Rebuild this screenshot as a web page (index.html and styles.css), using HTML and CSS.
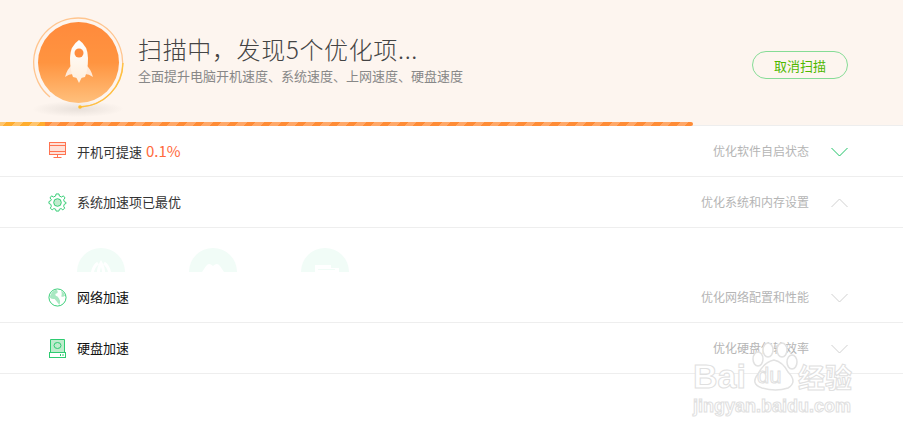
FILE: index.html
```html
<!DOCTYPE html>
<html lang="zh-CN">

<head>
    <meta charset="UTF-8">
    <title>扫描中</title>
    <link rel="stylesheet" href="styles.css">
</head>

<body>
    <div class="page">
        <div class="top">
            <div class="badge">
                <svg width="110" height="112" viewBox="0 0 110 112">
                    <defs>
                        <linearGradient id="disc" x1="0" y1="0" x2="0" y2="1">
                            <stop offset="0" stop-color="#ff8a3c" />
                            <stop offset="0.5" stop-color="#ff9440" />
                            <stop offset="1" stop-color="#ffc07c" />
                        </linearGradient>
                        <linearGradient id="body" x1="0" y1="0" x2="0" y2="1">
                            <stop offset="0" stop-color="#ffffff" />
                            <stop offset="1" stop-color="#fff0e0" />
                        </linearGradient>
                        <radialGradient id="shade">
                            <stop offset="0" stop-color="#e8e0da" />
                            <stop offset="1" stop-color="#fdf5ef" />
                        </radialGradient>
                    </defs>
                    <ellipse cx="45" cy="99" rx="46" ry="8" fill="url(#shade)" />
                    <circle cx="45.500" cy="52.500" r="40.500" fill="url(#disc)" />
                    <path d="M17 87 A44.500 44.500 0 1 1 47 97" fill="none" stroke="#ffc58f" stroke-width="1.300" />
                    <path d="M90 53 A44.500 44.500 0 0 1 47 97" fill="none" stroke="#ffc23e" stroke-width="1.300" />
                    <circle cx="47" cy="97" r="1.800" fill="#ffbc2e" />
                    <path d="M32 67 Q34 59 39 55 L40 64 Q36 64 32 67Z" fill="#ffe9d8" />
                    <path d="M60 67 Q58 59 53 55 L52 64 Q56 64 60 67Z" fill="#ffe9d8" />
                    <path d="M46 30 Q55 36 55 48 Q55 60 52 67 Q46 69 40 67 Q37 60 37 48 Q37 36 46 30Z" fill="url(#body)" />
                    <circle cx="46" cy="43" r="4.500" fill="#ff8d3f" />
                    <path d="M43 67 L49 67 L46 73Z" fill="#fff0e0" />
                </svg>
            </div>
            <div class="top-text">
                <div class="title">扫描中，发现5个优化项...</div>
                <div class="sub">全面提升电脑开机速度、系统速度、上网速度、硬盘速度</div>
            </div>
            <button class="cancel">取消扫描</button>
        </div>
        <div class="bar-track">
            <div class="bar"></div>
        </div>

        <div class="row">
            <svg class="row-icon" width="19" height="19" viewBox="0 0 19 19">
                <rect x="1.500" y="0.500" width="16" height="12" fill="#ffe1d8" stroke="#ff7350" />
                <path d="M1.500 3.500H17.500M1.500 9.500H17.500M9.500 12.500V15.500M5.500 15.500H13.500" fill="none" stroke="#ff7350" />
            </svg>
            <div class="name">开机可提速 <span class="pct">0.1%</span></div>
            <div class="hint">优化软件自启状态</div>
            <svg class="chev" width="17" height="10" viewBox="0 0 17 10">
                <path d="M0.500 1 L8.500 9 L16.500 1" fill="none" stroke="#1ec266" />
            </svg>
        </div>
        <div class="row">
            <svg class="row-icon" width="19" height="19" viewBox="0 0 20 20">
                <circle cx="10" cy="10" r="4" fill="#bfeccd" stroke="#2ecb71" />
                <path d="M8.500 1H11.500L12 3.200L14.300 4.200L16.200 3L17.900 5.200L16.500 7L17 9L19 10L19 11L17 12L16.500 14L17.600 16L15.600 17.700L13.800 16.400L12 17L11.500 19H8.500L8 17L6.200 16.400L4.400 17.700L2.400 16L3.500 14L3 12L1 11V9L3 8L3.500 7L2.100 5.200L3.800 3L5.700 4.200L8 3.200Z" fill="none" stroke="#2ecb71" />
            </svg>
            <div class="name">系统加速项已最优</div>
            <div class="hint">优化系统和内存设置</div>
            <svg class="chev" width="17" height="10" viewBox="0 0 17 10">
                <path d="M0.500 9 L8.500 1 L16.500 9" fill="none" stroke="#d0d0d0" />
            </svg>
        </div>
        <div class="panel">
            <div class="disc">
                <svg width="48" height="48" viewBox="0 0 48 48">
                    <path d="M15 30 Q15 19 21 15 M33 30 Q33 19 27 15 M21 30 Q21 20 24 15 Q27 20 27 30" fill="none" stroke="#fff" stroke-width="3" />
                </svg>
            </div>
            <div class="disc">
                <svg width="48" height="48" viewBox="0 0 48 48">
                    <path d="M13 24 L17 18 Q20 14 24 18 Q28 14 31 18 L35 24 L31 30 H17Z" fill="#fff" />
                </svg>
            </div>
            <div class="disc">
                <svg width="48" height="48" viewBox="0 0 48 48">
                    <path d="M14 17 H30 V20 H38 V30 H14Z" fill="#fff" />
                    <path d="M17 21.500 H34" stroke="#f1fcf7" />
                </svg>
            </div>
        </div>
        <div class="row">
            <svg class="row-icon" width="19" height="19" viewBox="0 0 20 20">
                <circle cx="10" cy="10" r="9" fill="#fff" stroke="#2ecb71" />
                <path d="M9 1.500 Q3 3 2 10 Q4 12 7 11.500 Q10 15 12 18 Q14 13 10 9 Q7 8 8 6 Q12 5 9 1.500Z M14 3 Q15 7 14 9 Q16 10 18 8 Q17 5 14 3Z" fill="#a9e8c2" />
            </svg>
            <div class="name dark">网络加速</div>
            <div class="hint">优化网络配置和性能</div>
            <svg class="chev" width="17" height="10" viewBox="0 0 17 10">
                <path d="M0.500 1 L8.500 9 L16.500 1" fill="none" stroke="#d0d0d0" />
            </svg>
        </div>
        <div class="row">
            <svg class="row-icon" width="19" height="19" viewBox="0 0 19 19">
                <path d="M2.500 0.500H16.500V13.500H2.500Z" fill="#bfeccd" stroke="#2ecb71" />
                <rect x="1.500" y="13.500" width="16" height="5" fill="#fff" stroke="#2ecb71" />
                <ellipse cx="9.500" cy="6.500" rx="3.500" ry="3" fill="none" stroke="#2ecb71" />
                <path d="M12.500 15V17M15 15V17" stroke="#2ecb71" />
            </svg>
            <div class="name dark">硬盘加速</div>
            <div class="hint">优化硬盘传输效率</div>
            <svg class="chev" width="17" height="10" viewBox="0 0 17 10">
                <path d="M0.500 1 L8.500 9 L16.500 1" fill="none" stroke="#d0d0d0" />
            </svg>
        </div>

        <div class="mark">
            <svg class="mark-paw" width="52" height="52" viewBox="0 0 52 52">
                <g fill="#fff" stroke="#e2e2e2" stroke-width="1.500">
                    <ellipse cx="10" cy="17" rx="5" ry="7" />
                    <ellipse cx="20" cy="8" rx="5" ry="7" />
                    <ellipse cx="34" cy="8" rx="5" ry="7" />
                    <ellipse cx="44" cy="20" rx="5" ry="7" />
                    <path d="M26 18 Q35 20 40 30 Q50 40 40 46 Q28 50 14 46 Q2 42 10 32 Q16 20 26 18Z" />
                </g>
            </svg>
            <div class="mark-logo">
                <span class="mark-bai">Bai</span>
                <span class="mark-du">du</span>
                <span class="mark-cn">经验</span>
            </div>
            <div class="mark-url">jingyan.baidu.com</div>
        </div>
    </div>
</body>

</html>
```
FILE: styles.css
```css
body {
    margin: 0;
    background-color: #fff;
    font-family: "Noto Sans CJK SC", "Liberation Sans", sans-serif;
}

.page {
    position: relative;
    width: 903px;
    height: 435px;
    overflow: hidden;
}

.top {
    display: flex;
    align-items: flex-start;
    height: 122px;
    padding-left: 33px;
    background-color: #fdf5ef;
}

.badge {
    width: 105px;
    height: 122px;
    padding-top: 10px;
    box-sizing: border-box;
}

.top-text {
    width: 614px;
    padding-top: 32px;
}

.title {
    font-size: 24px;
    font-weight: 300;
    letter-spacing: 0.65px;
    line-height: 34px;
    color: #444;
}

.sub {
    font-size: 13px;
    line-height: 20px;
    color: #888;
}

.cancel {
    width: 96px;
    height: 28px;
    margin-top: 51px;
    padding: 0;
    font-family: inherit;
    font-size: 13px;
    color: #4fb800;
    background-color: transparent;
    border: 1px solid #86dc96;
    border-radius: 14px;
}

.bar-track {
    height: 4px;
    background-color: #fdf5ef;
    border-bottom: 1px solid #eee;
    box-sizing: border-box;
}

.bar {
    width: 693px;
    height: 4px;
    border-radius: 0 2px 2px 0;
    background:
        repeating-linear-gradient(-45deg, #ffad2e 0 6px, #ffc56e 6px 12px) 0 0 / 45px 100% no-repeat,
        repeating-linear-gradient(-45deg, #ff8c36 0 6px, #ffa869 6px 12px);
}

.row {
    display: flex;
    align-items: center;
    height: 50px;
    padding: 0 55px 0 48px;
    border-bottom: 1px solid #eee;
}

.row-icon {
    margin-right: 10px;
    flex: none;
}

.name {
    flex: 1;
    padding-bottom: 2px;
    font-size: 13px;
    color: #333;
}

.dark {
    color: #111;
}

.pct {
    margin-left: 1px;
    font-size: 15px;
    color: #ff6a3c;
}

.hint {
    margin-right: 22px;
    padding-bottom: 2px;
    font-size: 12px;
    color: #b5b5b5;
}

.chev {
    flex: none;
    margin-top: 2px;
}

.panel {
    display: flex;
    gap: 64px;
    height: 24px;
    padding: 20px 0 0 77px;
    overflow: hidden;
}

.disc {
    width: 48px;
    height: 48px;
    border-radius: 50%;
    background-color: #f1fcf7;
    flex: none;
}

.mark {
    position: absolute;
    left: 693px;
    top: 342px;
    width: 170px;
}

.mark-paw {
    position: absolute;
    left: 55px;
    top: 0;
}

.mark-logo {
    position: relative;
    display: flex;
    align-items: center;
    height: 52px;
    padding-top: 16px;
    box-sizing: border-box;
    font-family: "Liberation Sans", "Noto Sans CJK SC", sans-serif;
    color: #fff;
    -webkit-text-stroke: 1px #e0e0e0;
    white-space: nowrap;
}

.mark-bai {
    width: 64px;
    font-size: 34px;
    font-weight: bold;
}

.mark-du {
    width: 41px;
    font-size: 22px;
}

.mark-cn {
    font-size: 27px;
    font-weight: bold;
}

.mark-url {
    font-family: "Liberation Sans", sans-serif;
    font-size: 18px;
    font-weight: bold;
    line-height: 24px;
    color: #fff;
    -webkit-text-stroke: 1px #e0e0e0;
}
```
